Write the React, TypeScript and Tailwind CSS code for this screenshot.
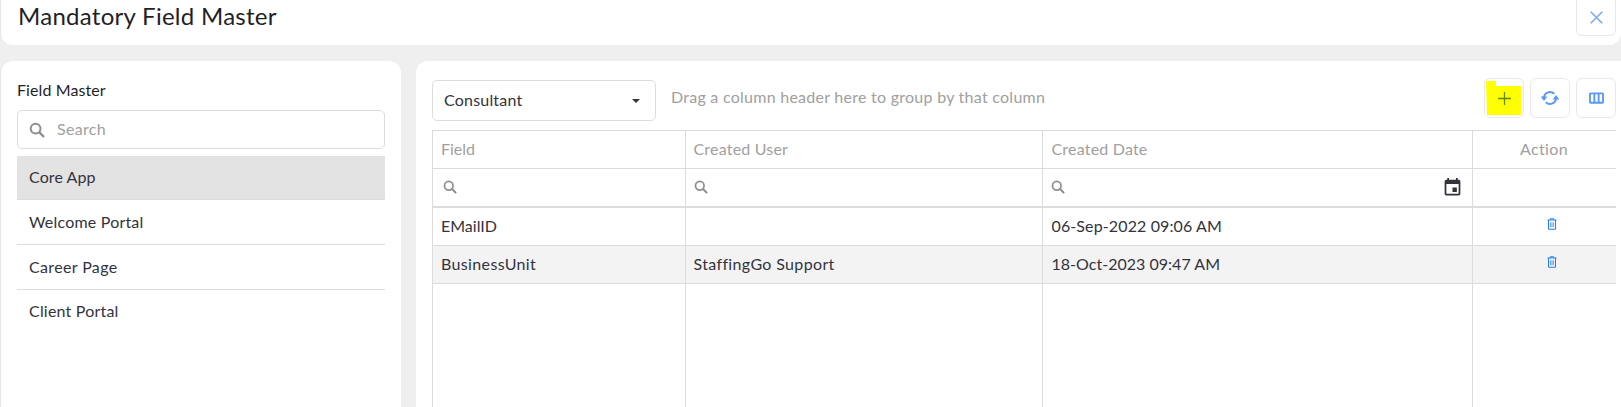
import React from "react";

function SearchIcon({ className }: { className: string }) {
  return (
    <svg viewBox="0 0 16 16" fill="none" stroke="currentColor" className={className}>
      <circle cx="6.6" cy="6.6" r="4.9" strokeWidth="2" />
      <path d="M10.4 10.4 15 15" strokeWidth="2.4" />
    </svg>
  );
}

function TrashIcon() {
  return (
    <svg viewBox="0 0 12 14" className="w-[10px] h-[12px]" fill="none" stroke="#1f7cf5" strokeWidth="1.2">
      <path d="M0.5 2.2h11M4 2V.7h4V2M1.8 2.4v10.9h8.4V2.4" />
      <path d="M4.6 5v5.8M7.4 5v5.8" />
    </svg>
  );
}

const filterIcon = <SearchIcon className="w-[14px] h-[14px] text-[#8f8f8f]" />;

function ToolButton({ children }: { children: React.ReactNode }) {
  return (
    <button className="relative w-[40px] h-[40px] rounded-[6px] border border-[#e8e8f0] bg-white flex items-center justify-center text-[#5b98f5]">
      {children}
    </button>
  );
}

const cell = "border-r border-[#dcdcdc] px-[8px]";

export default function App() {
  return (
    <div
      className="w-[1621px] h-[407px] overflow-hidden bg-[#efefef] flex flex-col text-[#33333d] text-[16px] tracking-[0.2px]"
      style={{ fontFamily: '"Lato", "Noto Sans", sans-serif' }}
    >
      <header className="h-[45px] shrink-0 bg-white rounded-b-[12px] border-l border-[#e6e6f2] flex items-start justify-between pl-[17px] pr-[5px]">
        <h1 className="text-[24px] leading-[32px] text-[#1f1f28] tracking-[0.28px]">Mandatory Field Master</h1>
        <button className="w-[40px] h-[36px] rounded-b-[6px] border border-t-0 border-[#e8e8f0] flex items-center justify-center">
          <svg viewBox="0 0 12 12" className="w-[13px] h-[13px]" fill="none" stroke="#7fa9f5" strokeWidth="1.5">
            <path d="M.7.7l10.6 10.6M11.3.7.7 11.3" />
          </svg>
        </button>
      </header>

      <div className="flex-1 flex gap-[15px] mt-[16px] min-h-0">
        <aside className="w-[401px] shrink-0 bg-white rounded-t-[12px] border-l border-[#e6e6f2] pl-[16px] pr-[16px] pt-[18px]">
          <div className="h-[21px] leading-[21px] tracking-[0.1px] text-[#1f1f28]">Field Master</div>
          <div className="mt-[10px] h-[39px] rounded-[5px] border border-[#dcdcdc] flex items-center pl-[11px]">
            <SearchIcon className="w-[16px] h-[16px] text-[#8f8f8f]" />
            <span className="ml-[12px] mb-[2px] text-[#a0a0a0] tracking-[0.3px]">Search</span>
          </div>
          <ul className="mt-[7px]">
            <li className="h-[44px] bg-[#e3e3e3] border-b border-[#dcdcdc] flex items-center pl-[12px] pb-[2px] tracking-[0.1px]">Core App</li>
            <li className="h-[45px] border-b border-[#dcdcdc] flex items-center pl-[12px]">Welcome Portal</li>
            <li className="h-[45px] border-b border-[#dcdcdc] flex items-center pl-[12px] pb-[1px] tracking-[0.36px]">Career Page</li>
            <li className="h-[43px] flex items-center pl-[12px] pb-[2px]">Client Portal</li>
          </ul>
        </aside>

        <main className="flex-1 bg-white rounded-tl-[12px] pl-[16px] pr-[5px] pt-[17px] min-w-0">
          <div className="flex items-start h-[52px]">
            <div className="w-[224px] h-[41px] mt-[2px] rounded-[5px] border border-[#dcdcdc] flex items-center justify-between pl-[11px] pr-[15px]">
              <span className="mb-[2px]">Consultant</span>
              <span className="w-0 h-0 border-x-[4px] border-x-transparent border-t-[4px] border-t-[#33333d]" />
            </div>
            <div className="ml-[15px] h-[38px] flex items-center text-[#a0a0a0] tracking-[0.26px]">
              Drag a column header here to group by that column
            </div>
            <div className="ml-auto flex gap-[6px]">
              <ToolButton>
                <svg viewBox="0 0 35 34" className="absolute left-[1px] top-[2px] w-[35px] h-[34px]">
                  <path d="M0 0h10v5h25v29H1z" fill="#ffff00" />
                </svg>
                <svg viewBox="0 0 14 14" className="relative w-[13px] h-[13px]" stroke="#5f8a10" strokeWidth="1.4">
                  <path d="M7 0v14M0 7h14" />
                </svg>
              </ToolButton>
              <ToolButton>
                <svg viewBox="0 0 18 16" className="w-[18px] h-[16px]" fill="none" stroke="#5b98f5" strokeWidth="2">
                  <path d="M3 8.5a6 6 0 0 1 10.3-4.6M15 7.5a6 6 0 0 1-10.3 4.6" />
                  <path d="M-.3 6.5h6.6L3 11zM11.7 9.5h6.6L15 5z" fill="#5b98f5" stroke="none" />
                </svg>
              </ToolButton>
              <ToolButton>
                <svg viewBox="0 0 16 12" className="w-[15px] h-[12px]" fill="none" stroke="#5b98f5" strokeWidth="2">
                  <rect x="1" y="1" width="14" height="10" rx=".8" />
                  <path d="M5.7 1v10M10.3 1v10" />
                </svg>
              </ToolButton>
            </div>
          </div>

          <div className="h-[300px] border border-[#dcdcdc] border-b-0 border-r-0 overflow-hidden">
            <table className="w-[1183px] h-[300px] table-fixed border-collapse">
              <colgroup>
                <col className="w-[252px]" />
                <col className="w-[357px]" />
                <col className="w-[430px]" />
                <col className="w-[144px]" />
              </colgroup>
              <tbody>
                <tr className="h-[37px] text-[#a0a0a0] border-b border-[#dcdcdc]">
                  <td className={`${cell} tracking-normal`}>Field</td>
                  <td className={cell}>Created User</td>
                  <td className={`${cell} pl-[9px]`}>Created Date</td>
                  <td className={`${cell} text-center tracking-[0.4px]`}>Action</td>
                </tr>
                <tr className="h-[39px] border-b-2 border-[#dcdcdc]">
                  <td className="border-r border-[#dcdcdc] pl-[10px]">{filterIcon}</td>
                  <td className="border-r border-[#dcdcdc] pl-[8px]">{filterIcon}</td>
                  <td className="border-r border-[#dcdcdc] pl-[8px] pr-[9px]">
                    <div className="flex items-center justify-between">
                      {filterIcon}
                      <svg viewBox="0 0 24 24" className="w-[21px] h-[21px]" fill="#33333d">
                        <path d="M17 12h-5v5h5v-5zM16 1v2H8V1H6v2H5c-1.11 0-1.99.9-1.99 2L3 19c0 1.1.89 2 2 2h14c1.1 0 2-.9 2-2V5c0-1.1-.9-2-2-2h-1V1h-2zm3 18H5V8h14v11z" />
                      </svg>
                    </div>
                  </td>
                  <td className="border-r border-[#dcdcdc]"></td>
                </tr>
                <tr className="h-[38px] border-b border-[#dcdcdc]">
                  <td className={`${cell} tracking-normal`}>EMailID</td>
                  <td className={cell}></td>
                  <td className={`border-r border-[#dcdcdc] pl-[9px] pr-[8px] tracking-[0.12px]`}>06-Sep-2022 09:06 AM</td>
                  <td className="border-r border-[#dcdcdc]">
                    <div className="flex justify-center -mt-[4px] ml-[16px]"><TrashIcon /></div>
                  </td>
                </tr>
                <tr className="h-[38px] bg-[#f3f3f3] border-b border-[#dcdcdc]">
                  <td className={`${cell} tracking-[0.36px]`}>BusinessUnit</td>
                  <td className={`${cell} tracking-[0.35px]`}>StaffingGo Support</td>
                  <td className={`border-r border-[#dcdcdc] pl-[9px] pr-[8px] tracking-[0.02px]`}>18-Oct-2023 09:47 AM</td>
                  <td className="border-r border-[#dcdcdc]">
                    <div className="flex justify-center -mt-[4px] ml-[16px]"><TrashIcon /></div>
                  </td>
                </tr>
                <tr>
                  <td className="border-r border-[#dcdcdc]"></td>
                  <td className="border-r border-[#dcdcdc]"></td>
                  <td className="border-r border-[#dcdcdc]"></td>
                  <td className="border-r border-[#dcdcdc]"></td>
                </tr>
              </tbody>
            </table>
          </div>
        </main>
      </div>
    </div>
  );
}
